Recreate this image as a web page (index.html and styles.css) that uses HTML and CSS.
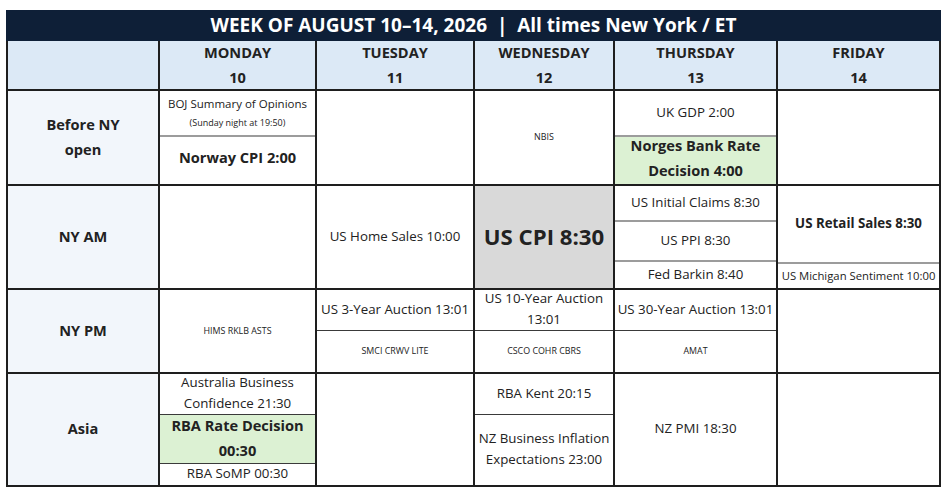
FILE: index.html
```html
<!DOCTYPE html>
<html>
<head>
<meta charset="utf-8">
<link rel="stylesheet" href="styles.css">
</head>
<body>
<div class="sheet">
  <div class="title">WEEK OF AUGUST 10–14, 2026&nbsp;&nbsp;|&nbsp;&nbsp;All times New York / ET</div>
  <div class="grid">
    <div class="cell head"></div>
    <div class="cell head">MONDAY<br>10</div>
    <div class="cell head">TUESDAY<br>11</div>
    <div class="cell head">WEDNESDAY<br>12</div>
    <div class="cell head">THURSDAY<br>13</div>
    <div class="cell head">FRIDAY<br>14</div>

    <div class="cell label">Before NY<br>open</div>
    <div class="cell stack">
      <div class="sub h44"><div class="boj">BOJ Summary of Opinions</div><div class="tiny">(Sunday night at 19:50)</div></div>
      <div class="sub grow sep-gray bold lift">Norway CPI 2:00</div>
    </div>
    <div class="cell"></div>
    <div class="cell small">NBIS</div>
    <div class="cell stack">
      <div class="sub h44">UK GDP 2:00</div>
      <div class="sub grow sep-gray green bold lift">Norges Bank Rate<br>Decision 4:00</div>
    </div>
    <div class="cell"></div>

    <div class="cell label">NY AM</div>
    <div class="cell"></div>
    <div class="cell">US Home Sales 10:00</div>
    <div class="cell cpi">US CPI 8:30</div>
    <div class="cell stack">
      <div class="sub h34">US Initial Claims 8:30</div>
      <div class="sub h40 sep-gray">US PPI 8:30</div>
      <div class="sub grow sep-gray">Fed Barkin 8:40</div>
    </div>
    <div class="cell stack">
      <div class="sub h76 bold13">US Retail Sales 8:30</div>
      <div class="sub grow sep-gray mini">US Michigan Sentiment 10:00</div>
    </div>

    <div class="cell label">NY PM</div>
    <div class="cell small">HIMS RKLB ASTS</div>
    <div class="cell stack">
      <div class="sub h40 nowrap">US 3-Year Auction 13:01</div>
      <div class="sub grow sep-dark small">SMCI CRWV LITE</div>
    </div>
    <div class="cell stack">
      <div class="sub h40">US 10-Year Auction<br>13:01</div>
      <div class="sub grow sep-dark small">CSCO COHR CBRS</div>
    </div>
    <div class="cell stack">
      <div class="sub h40 nowrap">US 30-Year Auction 13:01</div>
      <div class="sub grow sep-dark small">AMAT</div>
    </div>
    <div class="cell"></div>

    <div class="cell label">Asia</div>
    <div class="cell stack">
      <div class="sub h40">Australia Business<br>Confidence 21:30</div>
      <div class="sub h48 sep-dark green bold">RBA Rate Decision<br>00:30</div>
      <div class="sub grow sep-dark">RBA SoMP 00:30</div>
    </div>
    <div class="cell"></div>
    <div class="cell stack">
      <div class="sub h40">RBA Kent 20:15</div>
      <div class="sub grow sep-dark">NZ Business Inflation<br>Expectations 23:00</div>
    </div>
    <div class="cell">NZ PMI 18:30</div>
    <div class="cell"></div>
  </div>
</div>
</body>
</html>
```

FILE: styles.css
```css
html, body {
  margin: 0;
  padding: 0;
  background: #ffffff;
}

body {
  font-family: "Open Sans", "Noto Sans", sans-serif;
  color: #222222;
}

.sheet {
  width: 935px;
  margin: 10px 0 0 6px;
}

.title {
  height: 31px;
  background: #0e1f37;
  color: #ffffff;
  font-weight: 700;
  font-size: 19px;
  line-height: 31px;
  text-align: center;
  white-space: pre;
}

.grid {
  display: grid;
  grid-template-columns: 150px 155px 156px 138px 161px 161px;
  grid-template-rows: 48px 93px 102px 82px 111px;
  gap: 2px;
  padding: 0 2px 2px 2px;
  background: #1e1e1e;
}

.cell {
  background: #ffffff;
  display: flex;
  flex-direction: column;
  align-items: center;
  justify-content: center;
  text-align: center;
  font-size: 13.3px;
  line-height: 21px;
  overflow: hidden;
  box-sizing: border-box;
  padding-bottom: 2px;
}

.head {
  background: #dce9f6;
  font-weight: 700;
  font-size: 14.6px;
  line-height: 25px;
  padding-bottom: 1px;
}

.label {
  background: #f2f6fb;
  font-weight: 700;
  font-size: 14.6px;
  line-height: 25px;
}

.cpi {
  background: #d9d9d9;
  font-weight: 700;
  font-size: 22.2px;
}

.stack {
  justify-content: flex-start;
  align-items: stretch;
  padding-bottom: 0;
}

.sub {
  display: flex;
  flex-direction: column;
  align-items: center;
  justify-content: center;
  text-align: center;
  flex: 0 0 auto;
  width: 100%;
  min-height: 0;
  box-sizing: border-box;
  padding-bottom: 2px;
}

.nowrap { white-space: nowrap; }

.boj {
  font-size: 11.5px;
  line-height: 20px;
  white-space: nowrap;
}

.h34 { height: 34px; }
.h40 { height: 40px; }
.h44 { height: 44px; }
.h48 { height: 49px; }
.h76 { height: 76px; }
.grow { flex: 1 1 0; }

.sep-gray { border-top: 2px solid #9c9c9c; }
.sep-dark { border-top: 1px solid #3a3a3a; }

.green {
  background: #dcf1d3;
}

.bold {
  font-weight: 700;
  font-size: 14.6px;
  line-height: 25px;
}

.lift {
  padding-bottom: 6px;
}

.bold13 {
  font-weight: 700;
  font-size: 13.3px;
}

.tiny {
  font-size: 9px;
  line-height: 17px;
}

.small {
  font-size: 8.9px;
}

.mini {
  font-size: 11.3px;
  line-height: 16px;
  white-space: nowrap;
  padding-bottom: 0;
}
```
